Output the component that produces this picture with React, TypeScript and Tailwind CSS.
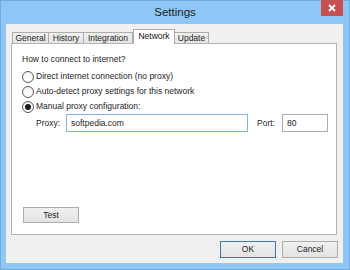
import React from "react";

const tabs = [
  { label: "General", w: "w-[37px]" },
  { label: "History", w: "w-[36px]" },
  { label: "Integration", w: "w-[50px]" },
  { label: "Network", w: "w-[42px]", active: true },
  { label: "Update", w: "w-[35px]" },
];

const options = [
  { label: "Direct internet connection (no proxy)" },
  { label: "Auto-detect proxy settings for this network" },
  { label: "Manual proxy configuration:", checked: true },
];

function Radio({ checked }: { checked?: boolean }) {
  return (
    <span className="w-[12px] h-[12px] rounded-full border border-[#5a5a5a] bg-gradient-to-b from-[#f2f2f2] to-white flex items-center justify-center shrink-0">
      {checked && <span className="w-[6px] h-[6px] rounded-full bg-[#1a1a1a]" />}
    </span>
  );
}

function WinButton({ label, isDefault }: { label: string; isDefault?: boolean }) {
  return (
    <button
      className={`w-[56px] h-[17px] flex items-center justify-center bg-gradient-to-b from-[#f0f0f0] to-[#e3e3e3] border text-[8.5px] text-[#1e1e1e] ${
        isDefault ? "border-[#3d7bad]" : "border-[#acacac]"
      }`}
    >
      {label}
    </button>
  );
}

export default function App() {
  return (
    <div
      className="w-[350px] h-[270px] bg-[#8fc6f5] border border-[#72abdf] flex flex-col"
      style={{ fontFamily: '"Liberation Sans", Arial, sans-serif' }}
    >
      {/* Title bar */}
      <div className="h-[23px] relative flex items-center justify-center">
        <span className="text-[11.5px] text-[#222] leading-none">Settings</span>
        <button className="absolute right-[6px] -top-px w-[22px] h-[16px] bg-[#c75050] flex items-center justify-center">
          <svg width="8" height="8" viewBox="0 0 8 8">
            <path d="M1 1L7 7M7 1L1 7" stroke="white" strokeWidth="1.8" />
          </svg>
        </button>
      </div>

      {/* Client area */}
      <div className="ml-[5px] mr-[6px] h-[239px] bg-[#f0f0f0] flex flex-col pt-[5px] pl-[5px]">
        {/* Tabs */}
        <div className="h-[14px] flex items-end pl-px relative z-10">
          {tabs.map((t) =>
            t.active ? (
              <div
                key={t.label}
                className={`${t.w} h-[15px] -mb-px bg-white border border-b-0 border-[#acacac] flex items-start justify-center pt-[1px] text-[8.5px] text-[#111] leading-[11px]`}
              >
                {t.label}
              </div>
            ) : (
              <div
                key={t.label}
                className={`${t.w} h-[11px] bg-gradient-to-b from-[#f0f0f0] to-[#e5e5e5] border border-b-0 border-[#acacac] -ml-px first:ml-0 flex items-center justify-center text-[8.5px] text-[#1e1e1e] leading-none`}
              >
                {t.label}
              </div>
            )
          )}
        </div>

        {/* Panel */}
        <div className="w-[326px] h-[192px] bg-white border border-[#b4b4b4] flex flex-col pl-[10px] pt-[8px] pb-[11px] text-[8.5px] text-[#1e1e1e]">
          <div className="leading-[15px]">How to connect to internet?</div>
          <div className="mt-[2px] flex flex-col">
            {options.map((o) => (
              <div key={o.label} className="h-[15px] flex items-center gap-[2px]">
                <Radio checked={o.checked} />
                <span className="leading-none">{o.label}</span>
              </div>
            ))}
          </div>
          <div className="h-[18px] flex items-center ml-[14px]">
            <span className="w-[30px]">Proxy:</span>
            <div className="w-[182px] h-[18px] border border-[#7db4ea] flex items-center pl-[4px]">softpedia.com</div>
            <span className="w-[25px] ml-[9px]">Port:</span>
            <div className="w-[46px] h-[18px] border border-[#abadb3] flex items-center pl-[4px]">80</div>
          </div>
          <div className="mt-auto ml-px">
            <button className="w-[56px] h-[16px] flex items-center justify-center bg-gradient-to-b from-[#f0f0f0] to-[#e3e3e3] border border-[#acacac] text-[8.5px] text-[#1e1e1e]">
              Test
            </button>
          </div>
        </div>

        {/* Dialog buttons */}
        <div className="mt-[6px] flex justify-end gap-[6px] pr-[5px]">
          <WinButton label="OK" isDefault />
          <WinButton label="Cancel" />
        </div>
      </div>
    </div>
  );
}
